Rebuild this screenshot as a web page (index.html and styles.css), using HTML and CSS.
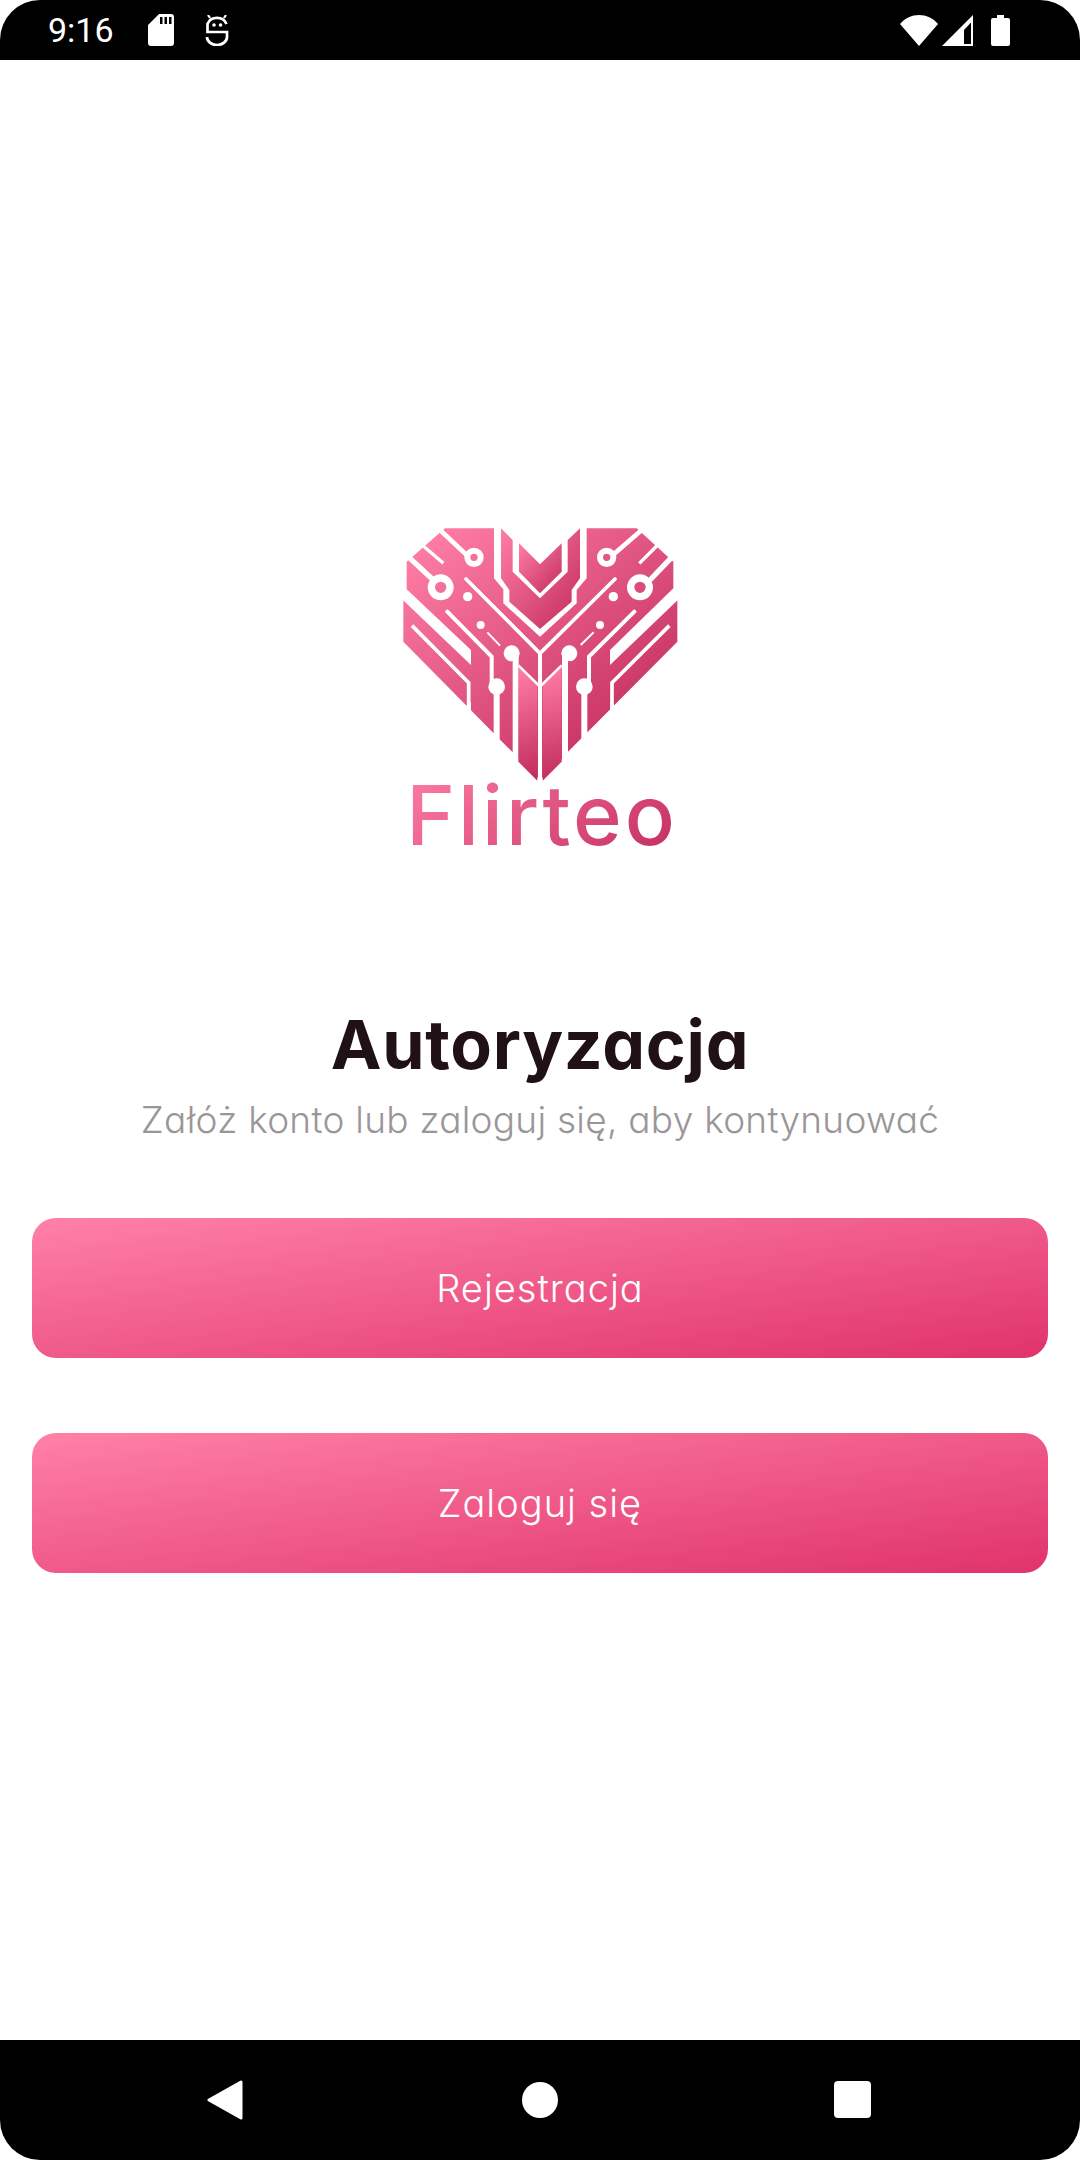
FILE: index.html
```html
<!DOCTYPE html>
<html lang="pl">
<head>
<meta charset="utf-8">
<title>Flirteo</title>
<link rel="stylesheet" href="styles.css">
</head>
<body>
<div class="screen">
  <header class="status">
    <div class="status-left">
      <span class="time">9:16</span>
      <svg class="ic-sd" viewBox="0 0 26 32"><path fill-rule="evenodd" fill="#fff" d="M11 0H23a3 3 0 0 1 3 3V29a3 3 0 0 1-3 3H3a3 3 0 0 1-3-3V11ZM12 3v7h2.500V3ZM16.500 3v7H19V3ZM21 3v7h2.500V3Z"/></svg>
      <svg class="ic-bot" viewBox="0 0 24 31"><path fill="none" stroke="#fff" stroke-width="2.700" d="M21.500 9C20 5 16 2.800 12 2.800S4 5 2.500 9V17H22V22A10 8 0 0 1 2 22"/><path fill="none" stroke="#fff" stroke-width="2.200" d="M3 0 5 3M21 0 19 3"/><circle cx="9" cy="10" r="1.800" fill="#fff"/><circle cx="15.500" cy="10" r="1.800" fill="#fff"/></svg>
    </div>
    <div class="status-right">
      <svg class="ic-wifi" viewBox="0 0 38 31"><path fill="#fff" d="M0 9C5 3 12 0 19 0s14 3 19 9L19 31Z"/></svg>
      <svg class="ic-signal" viewBox="0 0 31 31"><path fill="#fff" fill-rule="evenodd" d="M31 0V31H0ZM22 15 29 7.500V29H22Z"/></svg>
      <svg class="ic-batt" viewBox="0 0 19 31"><path fill="#fff" d="M6 0h7v3h4a2 2 0 0 1 2 2V29a2 2 0 0 1-2 2H2a2 2 0 0 1-2-2V5a2 2 0 0 1 2-2h4Z"/></svg>
    </div>
  </header>

  <main class="content">
    <div class="logo">
      <svg class="heart" viewBox="0 0 900 840">
        <defs>
          <linearGradient id="g" x1="0.1" y1="0" x2="0.9" y2="0.85"><stop offset="0" stop-color="#ff7ea6"/><stop offset="1" stop-color="#c22c5c"/></linearGradient>
          <linearGradient id="gp" x1="0" y1="0" x2="1" y2="1"><stop offset="0" stop-color="#ff7ea6"/><stop offset="1" stop-color="#c22c5c"/></linearGradient>
          <linearGradient id="gl" gradientUnits="userSpaceOnUse" x1="375" y1="480" x2="475" y2="790"><stop offset="0" stop-color="#ff7ea6"/><stop offset="1" stop-color="#c22c5c"/></linearGradient>
          <linearGradient id="gr" gradientUnits="userSpaceOnUse" x1="450" y1="480" x2="550" y2="790"><stop offset="0" stop-color="#ff7ea6"/><stop offset="1" stop-color="#c22c5c"/></linearGradient>
        </defs>
        <path fill="url(#g)" d="M165 55H312V205L340 238V280L450 380 560 280V240L590 205V55H740L850 155V250L862 265V395L450 810 40 395V265L50 250V155Z"/>
        <g fill="none" stroke="#fff" stroke-linecap="butt">
          <path stroke-width="14" d="M150 60 235 140M755 60 672 132"/>
          <path stroke-width="10" d="M100 108 160 160M800 108 748 160"/>
          <path stroke-width="16" d="M60 145 130 210M842 145 780 210"/>
          <circle cx="252" cy="142" r="20" stroke-width="18"/>
          <circle cx="650" cy="142" r="20" stroke-width="18"/>
          <circle cx="152" cy="232" r="28" stroke-width="22"/>
          <circle cx="750" cy="232" r="28" stroke-width="22"/>
          <path stroke-width="11" d="M66 347 236 518V610M838 347 666 518V610"/>
          <path stroke-width="12" stroke-linecap="round" d="M172 305 305 440V525M733 305 597 440V525"/>
          <path stroke-width="6" d="M292 367 330 407M611 367 572 405"/>
          <path stroke-width="11" stroke-linecap="round" d="M228 207 450 430 675 207"/>
          <path stroke-width="18" d="M320 530V700M583 530V700M377 430V760M525 430V760"/>
          <path stroke-width="12" d="M450 430V820"/>
        </g>
        <path fill="#fff" d="M30 262 50 238 243 420V465ZM872 262 850 235 660 420V465ZM450 800 440 812H460ZM225 590 243 605V575ZM678 590 660 605V575Z"/>
        <g fill="#fff">
          <circle cx="233" cy="260" r="14"/><circle cx="670" cy="260" r="14"/>
          <circle cx="272" cy="345" r="12"/><circle cx="630" cy="345" r="12"/>
          <circle cx="365" cy="430" r="24"/><circle cx="538" cy="430" r="24"/>
          <circle cx="320" cy="530" r="25"/><circle cx="583" cy="530" r="25"/>
        </g>
        <path fill="url(#gp)" d="M333 55 368 90V185L450 265 533 185V90L570 55V205L545 240V275L450 357 358 275V240L333 205Z"/>
        <path fill="url(#gp)" d="M387 100 450 163 515 100V185L450 250 387 185Z"/>
        <path fill="url(#gl)" d="M385 470 442 525V812L385 755Z"/>
        <path fill="url(#gr)" d="M458 525 515 470V755L458 812Z"/>
        <path fill="none" stroke="#fff" stroke-width="8" d="M385 466 450 530 515 466"/>
      </svg>
      <div class="wordmark">Flirteo</div>
    </div>
    <h1 class="title">Autoryzacja</h1>
    <p class="subtitle">Załóż konto lub zaloguj się, aby kontynuować</p>
    <div class="actions">
      <button class="btn">Rejestracja</button>
      <button class="btn">Zaloguj się</button>
    </div>
  </main>

  <nav class="navbar">
    <svg class="nav-back" viewBox="0 0 36 40"><path fill="#fff" stroke="#fff" stroke-width="3" stroke-linejoin="round" d="M34 2V38L2 20Z"/></svg>
    <span class="nav-home"></span>
    <span class="nav-recent"></span>
  </nav>
</div>
</body>
</html>
```
FILE: styles.css
```css
* { box-sizing: border-box; }
html, body { margin: 0; padding: 0; background: #fff; }
.screen { width: 1080px; height: 2160px; display: flex; flex-direction: column; background: #fff; font-family: Inter, "Noto Sans", sans-serif; font-feature-settings: "cv11" 1; overflow: hidden; }

.status { height: 60px; flex: none; background: #000; border-radius: 40px 40px 0 0; display: flex; justify-content: space-between; align-items: center; padding: 0 70px 0 48px; color: #fff; }
.status-left, .status-right { display: flex; align-items: center; }
.time { font-family: Roboto, sans-serif; font-size: 34px; line-height: 60px; width: 100px; font-feature-settings: normal; }
.ic-sd { width: 26px; height: 32px; }
.ic-bot { width: 24px; height: 31px; margin-left: 31px; }
.ic-wifi { width: 38px; height: 31px; }
.ic-signal { width: 31px; height: 31px; margin-left: 4px; }
.ic-batt { width: 19px; height: 31px; margin-left: 18px; }

.content { flex: 1; display: flex; flex-direction: column; align-items: center; padding-top: 450px; }
.logo { display: flex; flex-direction: column; align-items: center; height: 492px; width: 300px; }
.heart { width: 300px; height: 280px; flex: none; }
.wordmark { font-size: 83px; line-height: 96px; margin: -23px 0 0 4px; font-weight: 500; letter-spacing: 3px; background: linear-gradient(140deg, #ff7ea6, #c22c5c); -webkit-background-clip: text; background-clip: text; color: transparent; }
.title { margin: 0; font-size: 68px; font-weight: 700; line-height: 84px; letter-spacing: 0.75px; color: #1f1116; }
.subtitle { margin: 9px 0 0; font-size: 37px; font-weight: 300; line-height: 50px; letter-spacing: 0.26px; color: #9a9698; }
.actions { display: flex; flex-direction: column; gap: 75px; width: 100%; padding: 0 32px; margin-top: 73px; }
.btn { height: 140px; border: 0; border-radius: 24px; background: linear-gradient(172deg, #ff81a7, #e0336b); color: #fff; font-family: inherit; font-feature-settings: inherit; font-size: 38px; font-weight: 300; letter-spacing: 1px; padding: 0; }

.navbar { height: 120px; flex: none; background: #000; border-radius: 0 0 40px 40px; display: flex; align-items: center; justify-content: center; position: relative; }
.nav-back { position: absolute; left: 207px; top: 40px; width: 36px; height: 40px; }
.nav-home { width: 36px; height: 36px; border-radius: 50%; background: #fff; }
.nav-recent { position: absolute; left: 834px; top: 41px; width: 37px; height: 37px; border-radius: 4px; background: #fff; }
```
